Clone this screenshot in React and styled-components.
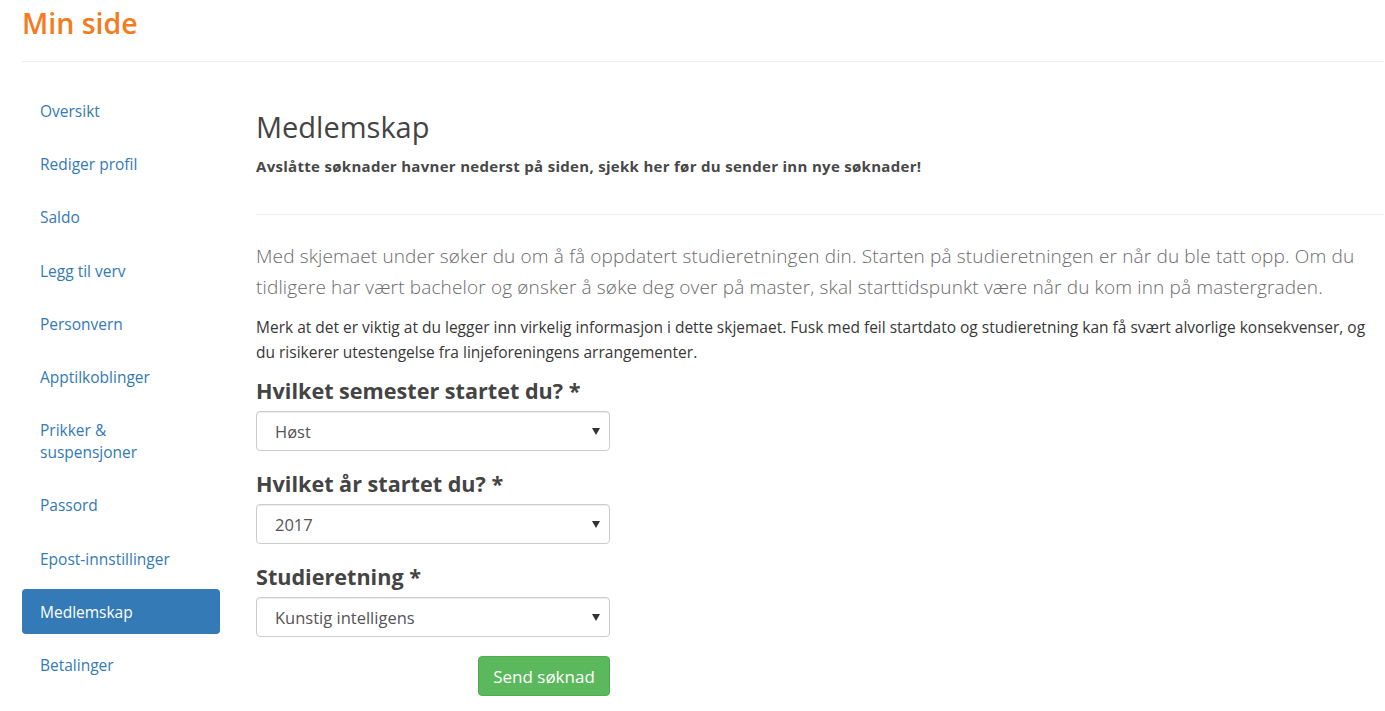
import React, { useState } from 'react';
import styled, { createGlobalStyle } from 'styled-components';

const GlobalStyle = createGlobalStyle`
	body {
		margin: 0;
		background: #ffffff;
		font-family: 'Open Sans', 'Noto Sans', sans-serif;
		color: #333333;
	}
	* {
		box-sizing: border-box;
	}
`;

const navItems = [
	'Oversikt',
	'Rediger profil',
	'Saldo',
	'Legg til verv',
	'Personvern',
	'Apptilkoblinger',
	'Prikker & suspensjoner',
	'Passord',
	'Epost-innstillinger',
	'Medlemskap',
	'Betalinger',
];

const fields = [
	{ label: 'Hvilket semester startet du? *', options: ['Høst', 'Vår'] },
	{ label: 'Hvilket år startet du? *', options: ['2017', '2016', '2015', '2018'] },
	{
		label: 'Studieretning *',
		options: ['Kunstig intelligens', 'Programvaresystemer', 'Databaser og søk'],
	},
];

export default function App() {
	const [active, setActive] = useState('Medlemskap');

	return (
		<Page>
			<GlobalStyle />
			<PageTitle>Min side</PageTitle>
			<Divider />
			<Layout>
				<Sidebar>
					{navItems.map((item) => (
						<NavItem
							key={item}
							active={active === item}
							onClick={() => setActive(item)}
						>
							{item === 'Prikker & suspensjoner' ? (
								<>
									Prikker &amp;
									<br />
									suspensjoner
								</>
							) : (
								item
							)}
						</NavItem>
					))}
				</Sidebar>

				<Main>
					<Heading>Medlemskap</Heading>
					<Warning>
						Avslåtte søknader havner nederst på siden, sjekk her før du sender inn nye
						søknader!
					</Warning>
					<MainDivider />
					<Lead>
						Med skjemaet under søker du om å få oppdatert studieretningen din. Starten på
						studieretningen er når du ble tatt opp. Om du tidligere har vært bachelor og
						ønsker å søke deg over på master, skal starttidspunkt være når du kom inn på
						mastergraden.
					</Lead>
					<Note>
						Merk at det er viktig at du legger inn virkelig informasjon i dette skjemaet.
						Fusk med feil startdato og studieretning kan få svært alvorlige konsekvenser, og
						du risikerer utestengelse fra linjeforeningens arrangementer.
					</Note>

					<Form onSubmit={(e) => e.preventDefault()}>
						{fields.map((field, index) => (
							<FormGroup key={field.label} last={index === fields.length - 1}>
								<Label>{field.label}</Label>
								<SelectWrap>
									<Select defaultValue={field.options[0]}>
										{field.options.map((opt) => (
											<option key={opt}>{opt}</option>
										))}
									</Select>
								</SelectWrap>
							</FormGroup>
						))}
						<ButtonRow>
							<SubmitButton type="submit">Send søknad</SubmitButton>
						</ButtonRow>
					</Form>
				</Main>
			</Layout>
		</Page>
	);
}

const Page = styled.div`
	padding: 0 0 20px 22px;
	width: 1385px;
	overflow: hidden;
`;

const PageTitle = styled.h1`
	margin: 0;
	padding-top: 4px;
	font-size: 28.5px;
	font-weight: 600;
	line-height: 38px;
	color: #f47b20;
`;

const Divider = styled.div`
	height: 1px;
	background: #eeeeee;
	margin-top: 19px;
	margin-right: 1px;
`;

const Layout = styled.div`
	display: flex;
	align-items: flex-start;
`;

const Sidebar = styled.ul`
	list-style: none;
	margin: 26.5px 0 0 0;
	padding: 0;
	width: 198px;
	flex-shrink: 0;
	display: flex;
	flex-direction: column;
	gap: 8px;
`;

const NavItem = styled.li`
	padding: 11.6px 18px;
	font-size: 15.5px;
	line-height: 22px;
	border-radius: 4px;
	cursor: pointer;
	color: ${({ active }) => (active ? '#ffffff' : '#337ab7')};
	background-color: ${({ active }) => (active ? '#337ab7' : 'transparent')};

	&:hover {
		background-color: ${({ active }) => (active ? '#337ab7' : '#eeeeee')};
	}
`;

const Main = styled.div`
	flex: 1;
	margin-left: 36px;
	padding-top: 47px;
	padding-right: 1px;
`;

const Heading = styled.h2`
	margin: 0;
	font-size: 29px;
	font-weight: 400;
	line-height: 36px;
	color: #444444;
`;

const Warning = styled.p`
	margin: 11px 0 0 0;
	font-size: 15px;
	font-weight: 700;
	letter-spacing: 0.3px;
	line-height: 20px;
	color: #484848;
`;

const MainDivider = styled.div`
	height: 1px;
	background: #eeeeee;
	margin-top: 38px;
`;

const Lead = styled.p`
	margin: 26px 0 0 0;
	padding-right: 10px;
	font-size: 19px;
	font-weight: 300;
	letter-spacing: 0.15px;
	line-height: 31px;
	color: #6b6b6b;
`;

const Note = styled.p`
	margin: 12px 0 0 0;
	padding-right: 8px;
	font-size: 15.5px;
	line-height: 25px;
	color: #383838;
`;

const Form = styled.form`
	margin-top: 13px;
	width: 354px;
	display: flex;
	flex-direction: column;
`;

const FormGroup = styled.div`
	margin-bottom: ${({ last }) => (last ? '19px' : '20px')};
`;

const Label = styled.label`
	display: block;
	font-size: 21.6px;
	font-weight: 700;
	line-height: 26px;
	color: #444444;
	margin-bottom: 7px;
	white-space: nowrap;
`;

const SelectWrap = styled.div`
	position: relative;

	&::after {
		content: '';
		position: absolute;
		right: 10px;
		top: 17px;
		width: 0;
		height: 0;
		border-left: 4px solid transparent;
		border-right: 4px solid transparent;
		border-top: 7px solid #333333;
		pointer-events: none;
	}
`;

const Select = styled.select`
	appearance: none;
	-webkit-appearance: none;
	width: 100%;
	height: 40px;
	padding: 0 30px 0 18px;
	font-family: 'Open Sans', 'Noto Sans', sans-serif;
	font-size: 16.5px;
	color: #555555;
	background: #ffffff;
	border: 1px solid #cccccc;
	border-radius: 4px;
	box-shadow: inset 0 1px 1px rgba(0, 0, 0, 0.075);
	outline: none;
`;

const ButtonRow = styled.div`
	display: flex;
	justify-content: flex-end;
`;

const SubmitButton = styled.button`
	width: 132px;
	height: 40px;
	padding: 0;
	font-family: 'Open Sans', 'Noto Sans', sans-serif;
	font-size: 17px;
	color: #ffffff;
	background-color: #5cb85c;
	border: 1px solid #4cae4c;
	border-radius: 4px;
	cursor: pointer;

	&:hover {
		background-color: #449d44;
	}
`;
